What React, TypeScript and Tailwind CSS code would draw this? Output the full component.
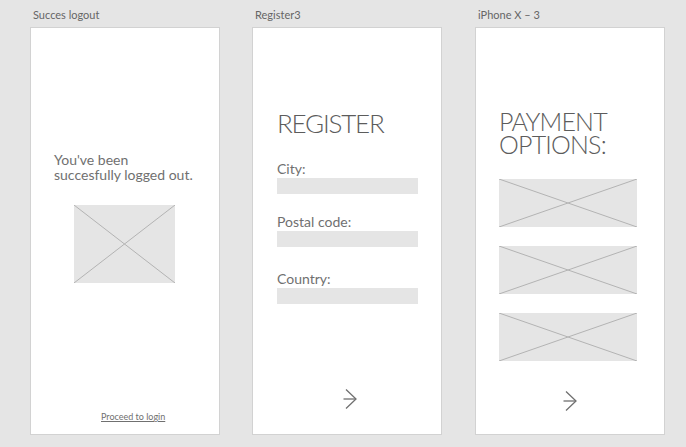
import React from 'react';

const font = { fontFamily: 'Lato, "Open Sans", sans-serif' };

function Placeholder({ className }: { className: string }) {
  return (
    <div className={`bg-[#e5e5e5] ${className}`}>
      <svg width="100%" height="100%" viewBox="0 0 100 100" preserveAspectRatio="none" className="block">
        <line x1="0" y1="0" x2="100" y2="100" stroke="#b3b3b3" strokeWidth="1" vectorEffect="non-scaling-stroke" />
        <line x1="100" y1="0" x2="0" y2="100" stroke="#b3b3b3" strokeWidth="1" vectorEffect="non-scaling-stroke" />
      </svg>
    </div>
  );
}

function NextArrow({ className }: { className: string }) {
  return (
    <svg width="16" height="22" viewBox="0 0 16 22" className={className}>
      <path d="M3 1.5 L13 11 L3 20.5" fill="none" stroke="#707070" strokeWidth="1.3" />
      <path d="M0.5 11 H13" fill="none" stroke="#707070" strokeWidth="1.3" />
    </svg>
  );
}

function Artboard({ title, className = '', children }: { title: string; className?: string; children: React.ReactNode }) {
  return (
    <div className={`flex flex-col ${className}`}>
      <div className="h-[14px] ml-[3px] text-[11px] leading-[14px] text-[#666666]">{title}</div>
      <div className="mt-[5px] w-[190px] h-[408px] bg-white border border-[#d2d2d2] flex flex-col">
        {children}
      </div>
    </div>
  );
}

function Field({ label, top }: { label: string; top: string }) {
  return (
    <div className={top}>
      <div className="text-[14px] leading-[16px] text-[#707070]">{label}</div>
      <div className="mt-[1px] w-[141px] h-[16px] bg-[#e5e5e5]" />
    </div>
  );
}

export default function App() {
  return (
    <div className="w-[686px] h-[447px] bg-[#e5e5e5] pt-[8px] pl-[30px] flex gap-[32px] overflow-hidden" style={font}>
      <Artboard title="Succes logout">
        <div className="pt-[124px] pl-[23px] text-[14px] leading-[15px] text-[#707070]">
          <div>You've been</div>
          <div>succesfully logged out.</div>
        </div>
        <Placeholder className="mt-[23px] ml-[43px] w-[101px] h-[78px]" />
        <div className="mt-auto mb-[11px] ml-[70px] text-[9px] leading-[12px] text-[#707070] underline">
          Proceed to login
        </div>
      </Artboard>

      <Artboard title="Register3">
        <div className="pl-[24px] flex flex-col flex-1">
          <div className="pt-[80px] text-[26px] leading-[30px] tracking-[-1.2px] font-light text-[#5c5c5c]">REGISTER</div>
          <Field label="City:" top="mt-[23px]" />
          <Field label="Postal code:" top="mt-[20px]" />
          <Field label="Country:" top="mt-[24px]" />
          <NextArrow className="mt-auto mb-[24px] ml-[66px]" />
        </div>
      </Artboard>

      <Artboard title="iPhone X – 3" className="ml-[1px]">
        <div className="pl-[23px] flex flex-col flex-1">
          <div className="pt-[82px] text-[25px] leading-[23px] tracking-[-0.8px] font-light text-[#5c5c5c]">
            <div>PAYMENT</div>
            <div>OPTIONS:</div>
          </div>
          <Placeholder className="mt-[23px] w-[138px] h-[48px]" />
          <Placeholder className="mt-[19px] w-[138px] h-[48px]" />
          <Placeholder className="mt-[19px] w-[138px] h-[48px]" />
          <NextArrow className="mt-auto mb-[22px] ml-[64px]" />
        </div>
      </Artboard>
    </div>
  );
}
